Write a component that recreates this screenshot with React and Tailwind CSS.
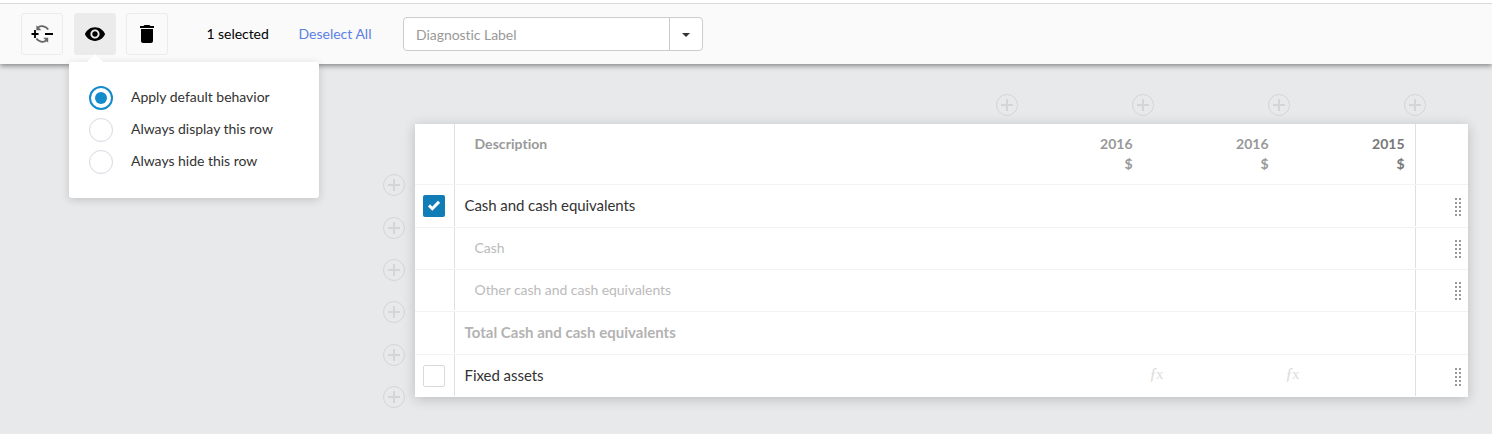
import { MdVisibility, MdDelete } from "react-icons/md";

function AddButton() {
  return (
    <button className="block size-[22px] shrink-0">
      <svg viewBox="0 0 22 22" className="size-[22px]" fill="none" stroke="#d4d5d7">
        <circle cx="11" cy="11" r="10.5" />
        <path d="M11 5v12M5 11h12" strokeWidth="2" />
      </svg>
    </button>
  );
}

function SwapSignIcon() {
  return (
    <svg viewBox="0 0 24 24" className="size-6" fill="none">
      <path d="M8 5.4A7.4 7.4 0 0 1 18.2 7.6" stroke="#666" strokeWidth="1.8" />
      <path d="M6.4 3.2v5h5z" fill="#666" />
      <path d="M16.6 18.6A7.4 7.4 0 0 1 6.4 16.4" stroke="#666" strokeWidth="1.8" />
      <path d="M18.2 20.8v-5h-5z" fill="#666" />
      <path d="M1.5 12h7M5 8v8M15 12h8" stroke="#000" strokeWidth="1.8" />
    </svg>
  );
}

function DragHandle() {
  return (
    <svg viewBox="0 0 6 18" className="h-[18px] w-1.5" fill="#999" shapeRendering="crispEdges">
      {[0, 4, 8, 12, 16].map((y) => (
        <g key={y}>
          <rect x="0" y={y} width="2" height="2" />
          <rect x="4" y={y} width="2" height="2" />
        </g>
      ))}
    </svg>
  );
}

function Checkbox({ checked }) {
  if (!checked) return <span className="size-[22px] rounded-[2px] border border-[#d9d9d9] bg-white" />;
  return (
    <span className="flex size-[22px] items-center justify-center rounded-[2px] bg-[#117db7]">
      <svg viewBox="0 0 12 11" className="h-[11px] w-3" fill="none" stroke="#fff" strokeWidth="3">
        <path d="M1 5.4l3.3 3.3L11 1.8" />
      </svg>
    </span>
  );
}

function Radio({ label, checked }) {
  return (
    <label className="flex h-8 items-center">
      {checked ? (
        <span className="mt-px flex size-6 items-center justify-center rounded-full border-2 border-[#148bcb]">
          <span className="size-3 rounded-full bg-[#148bcb]" />
        </span>
      ) : (
        <span className="mt-px size-6 rounded-full border border-[#d5d9e0]" />
      )}
      <span className="ml-[18px] leading-5 tracking-[-0.02px] text-[#333]">{label}</span>
    </label>
  );
}

function Fx() {
  return (
    <span className="flex w-[15px] items-baseline font-['Liberation_Serif',serif] text-[15px] leading-4 text-[#dcdcdc]">
      <i className="w-[7px] text-[17px]">ƒ</i>
      <span>x</span>
    </span>
  );
}

const rows = [
  { label: "Cash and cash equivalents", size: "h-[43px]", style: "pl-[9.5px] text-[15px] tracking-[-0.07px] text-[#333]", box: true, checked: true, handle: "pt-[13px]" },
  { label: "Cash", size: "h-[42px]", style: "pl-[19.5px] text-[#bbb]", handle: "pt-3" },
  { label: "Other cash and cash equivalents", size: "h-[42px]", style: "pl-[19.5px] tracking-[-0.05px] text-[#bbb]", handle: "pt-3" },
  { label: "Total Cash and cash equivalents", size: "h-[43px]", style: "pl-[9.5px] text-[15px] font-bold tracking-[0.02px] text-[#b3b3b3]" },
  { label: "Fixed assets", size: "h-[42px]", style: "pl-[9.5px] text-[15px] tracking-[-0.04px] text-[#333]", box: true, handle: "pt-[13px]", fx: true, last: true },
];

const years = [
  { year: "2016", color: "text-[#999]" },
  { year: "2016", color: "text-[#999]" },
  { year: "2015", color: "text-[#777]" },
];

function Row({ row }) {
  return (
    <div className={`flex ${row.size} ${row.last ? "pb-px" : "border-b border-[#f3f3f3] pb-px"}`}>
      <div className="flex w-10 items-center border-r border-[#dfdfdf] pl-2">
        {row.box && <Checkbox checked={row.checked} />}
      </div>
      <div className={`flex flex-1 items-center ${row.style}`}>{row.label}</div>
      <div className="w-[136px]" />
      <div className="flex w-[136px] items-center pb-1 pl-1.5">{row.fx && <Fx />}</div>
      <div className="flex w-[137px] items-center border-r border-[#dfdfdf] pb-1 pl-1.5">{row.fx && <Fx />}</div>
      <div className={`flex w-[52px] items-start justify-end pr-[7px] ${row.handle ?? ""}`}>
        {row.handle && <DragHandle />}
      </div>
    </div>
  );
}

function Popover() {
  return (
    <div className="absolute left-[-5px] top-[49px] z-20 h-[136px] w-[250px] rounded-[3px] bg-white px-5 pt-[19px] shadow-[0_2px_8px_rgba(0,0,0,0.16)]">
      <svg viewBox="0 0 16 8" className="absolute -top-2 left-[18px] h-2 w-4 overflow-visible" fill="#fff">
        <path d="M0 8L8 0l8 8z" />
      </svg>
      <Radio label="Apply default behavior" checked />
      <Radio label="Always display this row" />
      <Radio label="Always hide this row" />
    </div>
  );
}

export default function App() {
  return (
    <div className="h-[434px] overflow-hidden bg-[#e8e9eb] font-[Lato,sans-serif] text-sm">
      <div className="relative z-10 h-16 bg-[#fafafa] shadow-[0_2px_5px_rgba(0,0,0,0.42)]">
        <div className="h-1 border-b border-[#d9d9d9] bg-white" />
        <div className="flex h-[60px] items-center pl-[21px]">
          <button className="flex size-[42px] items-center justify-center rounded-[3px] border border-[#ececec]">
            <SwapSignIcon />
          </button>
          <div className="relative ml-[11px]">
            <button className="flex size-[42px] items-center justify-center rounded-[3px] bg-[#ebebeb]">
              <MdVisibility className="size-[22px]" />
            </button>
            <Popover />
          </div>
          <button className="ml-2.5 flex size-[42px] items-center justify-center rounded-[3px] border border-[#ececec]">
            <MdDelete className="size-6" />
          </button>
          <span className="ml-[38.5px] w-[92px] tracking-[-0.05px] text-black">1 selected</span>
          <a className="w-[104.5px] text-[#5b7fe5]">Deselect All</a>
          <div className="flex h-[34px] w-[300px] rounded-[4px] border border-[#ccc] bg-white">
            <div className="flex flex-1 items-center border-r border-[#ccc] pl-3 pt-0.5 tracking-[-0.05px] text-[#999]">Diagnostic Label</div>
            <div className="flex w-8 items-center justify-center pt-0.5">
              <svg viewBox="0 0 8 4" className="h-1 w-2" fill="#333">
                <path d="M0 0h8L4 4z" />
              </svg>
            </div>
          </div>
        </div>
      </div>

      <div className="flex pl-[383px] pt-[30px]">
        <div className="flex w-8 shrink-0 flex-col gap-5 pt-20">
          <AddButton />
          <div className="pt-px"><AddButton /></div>
          <AddButton />
          <AddButton />
          <div className="pt-px"><AddButton /></div>
          <AddButton />
        </div>
        <div className="w-[1053px]">
          <div className="flex gap-[114px] pl-[581px]">
            <AddButton />
            <AddButton />
            <AddButton />
            <AddButton />
          </div>
          <div className="mt-2 h-[273px] bg-white shadow-[0_2px_12px_rgba(0,0,0,0.2)]">
            <div className="flex h-[61px] border-b border-[#f3f3f3] font-bold leading-5">
              <div className="w-10 border-r border-[#dfdfdf]" />
              <div className="flex-1 pl-[19.5px] pt-2.5 tracking-[0.05px] text-[#999]">Description</div>
              {years.map(({ year, color }, i) => (
                <div key={i} className={`w-[136px] pr-[10.5px] pt-2.5 text-right ${color}`}>
                  <div>{year}</div>
                  <div>$</div>
                </div>
              ))}
              <div className="w-[53px] border-l border-[#dfdfdf]" />
            </div>
            {rows.map((row) => (
              <Row key={row.label} row={row} />
            ))}
          </div>
        </div>
      </div>
    </div>
  );
}
